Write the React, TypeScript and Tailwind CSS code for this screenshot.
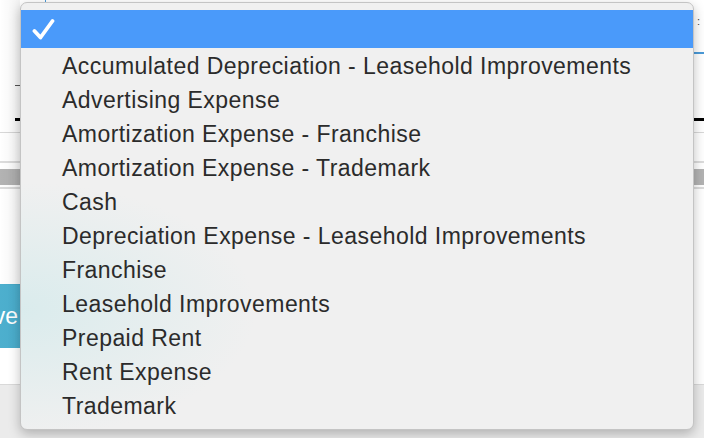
import React from 'react'

const accounts = [
  'Accumulated Depreciation - Leasehold Improvements',
  'Advertising Expense',
  'Amortization Expense - Franchise',
  'Amortization Expense - Trademark',
  'Cash',
  'Depreciation Expense - Leasehold Improvements',
  'Franchise',
  'Leasehold Improvements',
  'Prepaid Rent',
  'Rent Expense',
  'Trademark',
]

export default function App() {
  return (
    <div
      className="relative w-[704px] h-[438px] overflow-hidden bg-white"
      style={{ fontFamily: '"Liberation Sans", Arial, sans-serif' }}
    >
      {/* Page behind the menu */}
      <div className="flex flex-col">
        <div className="h-[52px]" />
        <div className="h-[2px] ml-[690px] bg-[#4a9ad8]" />
        <div className="h-[31px]" />
        <div className="h-[1px] w-[20px] ml-[15px] bg-[#555]" />
        <div className="h-[32px]" />
        <div className="h-[3px] ml-[15px] bg-black" />
        <div className="h-[11px]" />
        <div className="h-[1px] bg-[#d8d8d8]" />
        <div className="h-[28px]" />
        <div className="h-[2px] bg-[#dcdcdc]" />
        <div className="h-[6px]" />
        <div className="h-[16px] bg-[#b3b3b3]" />
        <div className="h-[2px]" />
        <div className="h-[2px] bg-[#dcdcdc]" />
        <div className="h-[95px]" />
        <div className="flex h-[64px]">
          <div className="flex items-center justify-end w-[120px] -ml-[100px] bg-gradient-to-r from-[#5cc0dc] to-[#4aaccb] text-white text-[23px] pr-[2px]">
            Save
          </div>
        </div>
        <div className="h-[36px]" />
        <div className="h-[1px] bg-[#d9d9d9]" />
        <div className="h-[60px] bg-[#ebebeb]" />
      </div>

      {/* shadow near menu edge */}
      <div className="absolute left-0 top-0 h-[285px] w-[20px] bg-gradient-to-r from-transparent to-black/5" />
      <div className="absolute left-[45px] top-0 h-[3px] w-[1px] bg-[#4a9ad8]" />
      <div className="absolute left-[697px] top-[16px] text-[11px] leading-none text-[#444]">:</div>

      {/* Select popup menu */}
      <div className="absolute left-[20px] top-[2px] w-[674px] h-[428px] rounded-[7px] border border-[#c4c4c4] bg-[#f0f0f0] bg-[radial-gradient(ellipse_35%_30%_at_0%_72%,rgba(200,232,234,0.55),transparent)] shadow-[0_4px_12px_rgba(0,0,0,0.25)] py-[7px]">
        <div className="flex items-center h-[38px] bg-[#4a9afa] pl-[11px]">
          <svg width="23" height="23" viewBox="0 0 23 23" fill="none">
            <path
              d="M2.5 13 L8.5 19.5 L20.5 3"
              stroke="white"
              strokeWidth="3.8"
              strokeLinecap="round"
              strokeLinejoin="round"
            />
          </svg>
        </div>
        {accounts.map((name) => (
          <div key={name} className="flex items-center h-[34px] pt-[2px] pl-[41px] text-[23px] tracking-[0.45px] text-[#2b2b2b] whitespace-nowrap">
            {name}
          </div>
        ))}
      </div>
    </div>
  )
}
